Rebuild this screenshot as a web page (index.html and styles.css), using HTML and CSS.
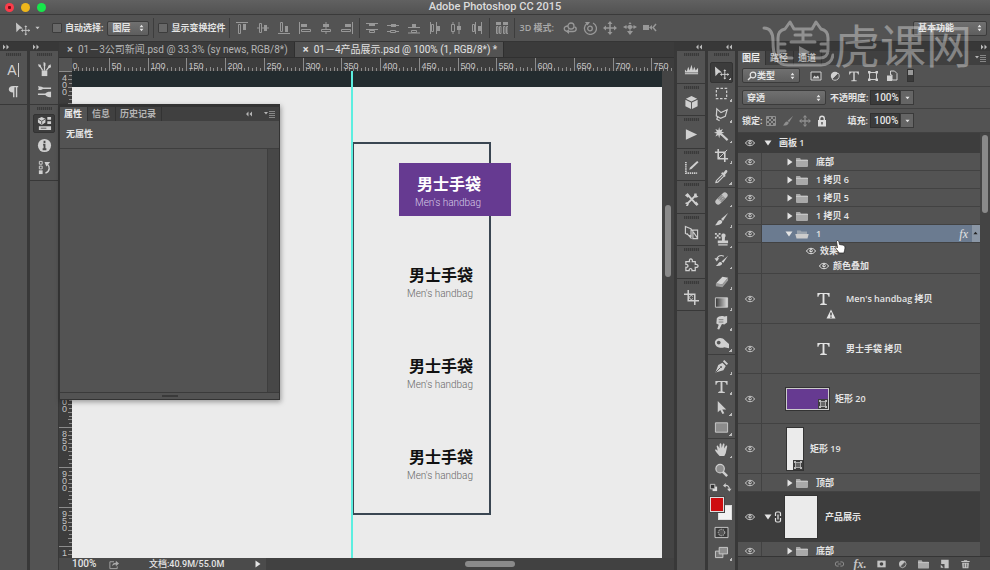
FILE: index.html
```html
<!DOCTYPE html>
<html lang="zh-CN">
<head>
    <meta charset="UTF-8">
    <meta name="viewport" content="width=device-width, initial-scale=1.0">
    <title>Adobe Photoshop CC 2015</title>
    <link rel="stylesheet" href="styles.css">
</head>
<body>
    <svg class="sprite" width="0" height="0" aria-hidden="true">
        <!-- common -->
        <symbol id="updown" viewBox="0 0 6 10"><path d="M3 1 5.4 4H.6zM3 9 .6 6h4.8z" fill="currentColor"/></symbol>
        <symbol id="down" viewBox="0 0 6 4"><path d="M.5.5h5L3 3.5z" fill="currentColor"/></symbol>
        <symbol id="dbl-right" viewBox="0 0 8 6"><path d="M1 .5 3.5 3 1 5.5zM4.5.5 7 3 4.5 5.5z" fill="currentColor"/></symbol>
        <symbol id="dbl-left" viewBox="0 0 8 6"><path d="M3.5.5 1 3l2.500 2.500zM7 .5 4.500 3 7 5.500z" fill="currentColor"/></symbol>
        <symbol id="panel-menu" viewBox="0 0 12 8"><path d="M0 2h4L2 4.500z" fill="currentColor"/><path d="M5 1.500h6M5 3.500h6M5 5.500h6M5 7.500h6" stroke="currentColor" opacity=".6"/></symbol>
        <symbol id="eye" viewBox="0 0 10 8"><path d="M.5 4C2.500.4 7.500.4 9.500 4 7.500 7.600 2.500 7.600.5 4z" fill="#4a4a4a" stroke="currentColor"/><circle cx="5" cy="3.800" r="1.700" fill="currentColor"/><circle cx="5.200" cy="3.600" r=".7" fill="#333"/></symbol>
        <symbol id="folder" viewBox="0 0 12 10"><path d="M0 1.500Q0 1 .5 1H4l1 1.500h6q1 0 1 1V9q0 1-1 1H1q-1 0-1-1z" fill="#a9a9a9"/><path d="M0 3.500h12" stroke="#c6c6c6"/></symbol>
        <symbol id="folder-open" viewBox="0 0 14 10"><path d="M2 5V1.500h3.500l1 1H12V5z" fill="#9aa3ad"/><path d="M.3 5h13.400L12.500 9.500h-11z" fill="#ccc"/></symbol>
        <symbol id="tri-right" viewBox="0 0 6 8"><path d="M.5.500 5.500 4 .5 7.500z" fill="currentColor"/></symbol>
        <symbol id="tri-down" viewBox="0 0 8 6"><path d="M.5.500h7L4 5.500z" fill="currentColor"/></symbol>
        <symbol id="shape-badge" viewBox="0 0 10 10"><path d="M0 0h10v10H0z" fill="#3e3e3e"/><path d="M2.500 2.500h5v5h-5z" fill="#666" stroke="#aaa"/><path d="M1 1h2v2H1zM7 1h2v2H7zM1 7h2v2H1zM7 7h2v2H7z" fill="#bbb"/></symbol>

        <!-- tools -->
        <symbol id="move" viewBox="0 0 16 16"><path d="M1 1.500 8.500 8 5 8.300 1.500 12z" fill="currentColor"/><path d="M11.500 5.500v9M7 10h9" stroke="currentColor"/><path d="m11.500 4.500 1.600 2h-3.200zM11.500 15.500l1.600-2h-3.200zM6.500 10l2-1.600v3.200zM16 10l-1.800-1.600v3.200z" fill="currentColor"/></symbol>
        <symbol id="marquee" viewBox="0 0 16 16"><path d="M2.500 2.500h11v11h-11z" fill="none" stroke="currentColor" stroke-width="1.300" stroke-dasharray="2.700 1.700"/></symbol>
        <symbol id="lasso" viewBox="0 0 16 16"><path d="m3 2 4.500 4L14 3l-2 7-5 2-4.500-2.500zM4 10l-1 3 3 1.500" fill="none" stroke="currentColor" stroke-width="1.300"/></symbol>
        <symbol id="wand" viewBox="0 0 16 16"><path d="m7.500 7.500 7 6.500" stroke="currentColor" stroke-width="2.200"/><path d="m5.500 0 .9 3.500L9.500 2 8 5l3 .8-3 1.200 1.500 2.700L6.400 8.500 5.500 12l-1-3.500L1.500 10 3 7 0 6l3-1-1.500-3L4.600 3.500z" fill="currentColor"/></symbol>
        <symbol id="crop" viewBox="0 0 16 16"><path d="M4.500 1v10.500H15M1 4.500h10.500V15" fill="none" stroke="currentColor" stroke-width="1.700"/><path d="m5 11 9-9" stroke="currentColor"/></symbol>
        <symbol id="dropper" viewBox="0 0 16 16"><path d="m9 6-6.500 6.500L2 14.500l2-.5L10.500 7.500" fill="none" stroke="currentColor" stroke-width="1.200"/><path d="m7.500 4.500 1.500-1 1 .5 2-2.500c1.500-1 3 .5 2 2L11.800 6l.5 1.500-1 1z" fill="currentColor"/></symbol>
        <symbol id="heal" viewBox="0 0 16 16"><g transform="rotate(-45 8 8)"><rect x="0" y="5" width="16" height="6" rx="3" fill="#c4c4c4"/><path d="M5 5h6v6H5z" fill="#8b8b8b"/><path d="M6 7h1m2 0h1M6 9h1m2 0h1" stroke="#eee"/></g></symbol>
        <symbol id="brush" viewBox="0 0 16 16"><path d="M15 1 7.500 7.500 9.500 9.500z" fill="currentColor"/><path d="M6.500 8.500c2 0 3 1.500 2 3C7.500 13.500 4 14.500 1 14c2-1 2.500-5 5.500-5.500z" fill="currentColor"/></symbol>
        <symbol id="stamp" viewBox="0 0 16 16"><path d="M1 1h2v2H1zM5 1h2v2H5zM3 3h2v2H3zM1 5h2v2H1zM5 5h2v2H5z" fill="currentColor"/><path d="M10 1.500c2.500 0 3 2.500 1.700 4.200L11.500 9H15v3H4V9h4.500l-.2-3.300C7.500 4 7.800 1.500 10 1.500zM4.500 13h10v1.500h-10z" fill="currentColor"/></symbol>
        <symbol id="history-brush" viewBox="0 0 16 16"><path d="M15 3 8 9l2 1.500zM7 9.500c2 .5 2 2 1 3-1.500 1.300-4 1.500-6 1 2.500-1 2.500-4 5-4z" fill="currentColor"/><path d="M3 7c0-3.500 4-5.500 7.500-3.500" fill="none" stroke="currentColor" stroke-width="1.300"/><path d="M.5 5.500h5L3 9z" fill="currentColor"/></symbol>
        <symbol id="eraser" viewBox="0 0 16 16"><path d="m9 3 6 1-6 7-7-1z" fill="#d2d2d2"/><path d="m2 10 7 1v3l-7-1zM9 11l6-7v3l-6 7z" fill="#9c9c9c"/></symbol>
        <symbol id="gradient" viewBox="0 0 16 16"><linearGradient id="gr"><stop stop-color="#333"/><stop offset="1" stop-color="#ddd"/></linearGradient><path d="M1.500 3h13v10h-13z" fill="url(#gr)" stroke="#ccc"/></symbol>
        <symbol id="smudge" viewBox="0 0 16 16"><path d="M3 3.500C5 1 8 .5 11 1.500l3-.5v7l-3 2-2.500-.5L5.500 15.500l-2-.5L5 10.500 2.500 9z" fill="currentColor"/><path d="M5 5h5M5 7.500h5" stroke="#777"/></symbol>
        <symbol id="dodge" viewBox="0 0 16 16"><path d="M1 6c2-5 8-5 10.500-1.500L16 8.500V13l-5-1c-4 1.500-10.500 0-10-6z" fill="currentColor"/><circle cx="5" cy="7" r="2" fill="#555"/></symbol>
        <symbol id="pen" viewBox="0 0 16 16"><path d="m1.500 14.500 3-8L9 4l3.500 3.500L10 12z" fill="currentColor"/><path d="m9.500 2.500 1.500-1.500L15 5l-1.500 1.500z" fill="currentColor"/><path d="m2 14 5-5" stroke="#555"/><circle cx="7.500" cy="8.500" r="1" fill="#555"/></symbol>
        <symbol id="type" viewBox="0 0 16 16"><path d="M1.500 2h13v4h-1.200C13 3.800 12.300 3.200 9 3.200v9.300c0 .9.8 1.200 2.500 1.300V15h-7v-1.200c1.700-.1 2.500-.4 2.500-1.300V3.200C3.700 3.200 3 3.800 2.700 6H1.500z" fill="currentColor"/></symbol>
        <symbol id="arrow" viewBox="0 0 16 16"><path d="M4 1v12l2.700-2.300L9 15l2-1-2.200-4H13z" fill="currentColor"/></symbol>
        <symbol id="rect" viewBox="0 0 16 16"><path d="M1.500 3h13v10h-13z" fill="#8c8c8c" stroke="#ccc"/></symbol>
        <symbol id="hand" viewBox="0 0 16 16"><path d="M6 15c-2-2-4-4.500-5-6.500.8-1 2-.2 3 1L2.800 4.500c.4-1.200 1.500-1 1.900.2L5.800 7 6 2c.5-1 1.500-1 1.800 0L8.200 6.500 9.500 2c.6-.9 1.700-.6 1.700.5L10.700 7l2-3c.8-.6 1.600 0 1.300 1L12.500 12 11 15z" fill="currentColor"/></symbol>
        <symbol id="zoom" viewBox="0 0 16 16"><path d="m9 9 5 5" stroke="currentColor" stroke-width="2.600"/><circle cx="6.500" cy="6" r="4.500" fill="#8e8e8e" stroke="currentColor" stroke-width="1.300"/></symbol>
        <symbol id="swap" viewBox="0 0 10 10"><path d="M2 3c3-1 5 1 5 4" fill="none" stroke="currentColor" stroke-width="1.300"/><path d="M0 3l3-3v5zM4.500 6.500h5L7 9.500z" fill="currentColor"/></symbol>
        <symbol id="default-colors" viewBox="0 0 10 10"><path d="M4 4h5v5H4z" fill="#ddd"/><path d="M1.500 1.500h5v5h-5z" fill="#333" stroke="#ccc"/></symbol>
        <symbol id="mask" viewBox="0 0 16 14"><path d="M1 1.500h14v11H1z" fill="#3a3a3a" stroke="#ccc"/><circle cx="8" cy="7" r="3.500" fill="#555" stroke="#ccc" stroke-dasharray="1.500 1"/></symbol>
        <symbol id="screen" viewBox="0 0 16 14"><path d="M1.500 5.500h8v7h-8z" fill="#777" stroke="#ccc"/><path d="M5.500 1.500h9v7h-9z" fill="#8e8e8e" stroke="#ccc"/></symbol>

        <!-- collapsed panels -->
        <symbol id="char" viewBox="0 0 3 16"><path d="M1.500 1v14" stroke="currentColor"/></symbol>
        <symbol id="para" viewBox="0 0 16 16"><path d="M7.500 2H13v1.500h-1V14h-1.500V3.500H9V14H7.500V9C1.500 9 1.500 2 7.500 2z" fill="currentColor"/></symbol>
        <symbol id="brush-pot" viewBox="0 0 16 16"><path d="M5 9h6v6H5z" fill="currentColor"/><path d="M6 9 3 4M8 9V3M10 9l3-4" stroke="currentColor" stroke-width="1.300"/><path d="M1 2.500 4 3v3L2 5zM7 0l2 1v3H7zM14.500 2.500 12 4v3l3-1.500z" fill="currentColor"/></symbol>
        <symbol id="brushes" viewBox="0 0 16 16"><path d="M6 4.500h9M1 11h9" stroke="currentColor" stroke-width="1.500"/><path d="M1 2c3 1 4 0 6 2.500C5 7 3 6 1 6.500 2 5 2 4 1 2zM15 8c-2 .5-5 0-6.500 3C10 14.500 13 14 15 14z" fill="currentColor"/></symbol>
        <symbol id="props" viewBox="0 0 16 16"><path d="m5 1 4 2v4L5 9.500 1 7V3z" fill="currentColor"/><path d="m1.500 3.500 3.500 2 3.500-2M5 5.500V9" stroke="#555" fill="none"/><path d="M11 1h4v3h-4zM11 5.500h4v3h-4zM2 11h13v4H2z" fill="currentColor"/><path d="M4 13h6" stroke="#555"/></symbol>
        <symbol id="info" viewBox="0 0 16 16"><circle cx="8" cy="8" r="7" fill="currentColor"/><path d="M8 3v2.200M6.500 7H8v5M6 12h4" stroke="#4b4b4b" stroke-width="2" fill="none"/></symbol>
        <symbol id="history" viewBox="0 0 16 16"><path d="M2.500 1.500h3v3h-3zM2.500 6.500h3v3h-3z" fill="none" stroke="currentColor"/><path d="M2 11h4v4H2z" fill="currentColor"/><path d="M9 14c5-2 5-7 2-9.500" fill="none" stroke="currentColor" stroke-width="1.500"/><path d="M8 2h6l-4 5z" fill="currentColor"/></symbol>
        <symbol id="histogram" viewBox="0 0 16 16"><path d="M1 13V8l2 2 1.500-5L6 9l2-6 1.500 6L11 5l1.500 4L15 6v7z" fill="currentColor"/><path d="M1 11.500h14" stroke="#777"/></symbol>
        <symbol id="cube" viewBox="0 0 16 16"><path d="m8 1 6 3-6 3-6-3zM1.500 5 7.500 8v7l-6-3zM14.500 5l-6 3v7l6-3z" fill="currentColor"/></symbol>
        <symbol id="play" viewBox="0 0 16 16"><path d="m2 2.500 12 5.500-12 5.500z" fill="currentColor"/></symbol>
        <symbol id="measure" viewBox="0 0 16 16"><path d="M2 2v12h12" fill="none" stroke="currentColor" stroke-width="1.800" stroke-dasharray="1.500 .8"/><path d="m5.500 10.500 1-2.500L14 1l1.500 1.500L8 9.500z" fill="currentColor"/></symbol>
        <symbol id="wrench" viewBox="0 0 16 16"><path d="M3 13 13 3M4 3l9 10" stroke="currentColor" stroke-width="2"/><path d="M1 3.500 4 1l2 3-2 2zM11 1.500 10.500 5l2 1L15.500 5l-2-1 0-2.500zM11 12l2-2 2.500 3-2 2zM1 12c2-2 4-1 4 1s-2 2-3 2l1-2z" fill="currentColor"/></symbol>
        <symbol id="layer-comps" viewBox="0 0 16 16"><path d="m1.500 1.500 6 2.500v8l-6-3zM9.500 5.500h5v9h-5zM3 9l5 5.500M7.500 4l7 10" fill="none" stroke="currentColor" stroke-width="1.200"/></symbol>
        <symbol id="puzzle" viewBox="0 0 16 16"><path d="M2 5h4C4.500 1 10 1 8.800 5H12v3c4-1 4 4 0 3v3.500H8.500c.5-3-3.500-3-3 0H2V11c3 .5 3-3.500 0-3z" fill="none" stroke="currentColor" stroke-width="1.300"/></symbol>
        <symbol id="crop-c" viewBox="0 0 16 16"><path d="M4.500 0v11.500H16M0 4.500h11.500V16" fill="none" stroke="currentColor" stroke-width="1.600"/><path d="M9.500 7a2 2 0 1 0 0 2" fill="none" stroke="currentColor"/></symbol>

        <!-- align and distribute -->
        <symbol id="al-top" viewBox="0 0 12 12"><path d="M0 .5h12M2.500 2.500h2v9h-2z" fill="none" stroke="currentColor"/><path d="M7 2h3v6H7z" fill="currentColor"/></symbol>
        <symbol id="al-mid" viewBox="0 0 12 12"><path d="M0 6h12" stroke="currentColor"/><path d="M2.500 1.500h2v9h-2z" fill="#535353" stroke="currentColor"/><path d="M7 3h3v6H7z" fill="currentColor"/></symbol>
        <symbol id="al-bottom" viewBox="0 0 12 12"><path d="M0 11.500h12M2.500.5h2v9h-2z" fill="none" stroke="currentColor"/><path d="M7 4h3v6H7z" fill="currentColor"/></symbol>
        <symbol id="al-center" viewBox="0 0 12 12"><path d="M6 0v12" stroke="currentColor"/><path d="M1.500 7.500h9v2h-9z" fill="#535353" stroke="currentColor"/><path d="M3 2h6v3H3z" fill="currentColor"/></symbol>
        <symbol id="al-left" viewBox="0 0 12 12"><path d="M.5 0v12M2.500 7.500h9v2h-9z" fill="none" stroke="currentColor"/><path d="M2 2h6v3H2z" fill="currentColor"/></symbol>
        <symbol id="al-right" viewBox="0 0 12 12"><path d="M11.500 0v12M.5 7.500h9v2h-9z" fill="none" stroke="currentColor"/><path d="M4 2h6v3H4z" fill="currentColor"/></symbol>
        <symbol id="ds-top" viewBox="0 0 12 12"><path d="M0 1.500h12M0 7.500h12" stroke="currentColor"/><path d="M3 2h6v2H3z" fill="currentColor"/><path d="M3.500 8.500h5v2h-5z" fill="none" stroke="currentColor"/></symbol>
        <symbol id="ds-mid" viewBox="0 0 12 12"><path d="M0 3.500h12M0 9.500h12" stroke="currentColor"/><path d="M4 2h5v3H4z" fill="currentColor"/><path d="M3.500 8.500h5v2h-5z" fill="#535353" stroke="currentColor"/></symbol>
        <symbol id="ds-bottom" viewBox="0 0 12 12"><path d="M0 5.500h12M0 11h12" stroke="currentColor"/><path d="M4 2h4v3H4z" fill="currentColor"/><path d="M3.500 8.500h5v2h-5z" fill="none" stroke="currentColor"/></symbol>
        <symbol id="ds-left" viewBox="0 0 12 12"><path d="M1.500 0v12M7.500 0v12M2.500 2.500h2v7h-2z" fill="none" stroke="currentColor"/><path d="M8 4h3v5H8z" fill="currentColor"/></symbol>
        <symbol id="ds-center" viewBox="0 0 12 12"><path d="M3 0v12M9 0v12" stroke="currentColor"/><path d="M1.500 2.500h3v7h-3z" fill="#535353" stroke="currentColor"/><path d="M7 4h4v4H7z" fill="currentColor"/></symbol>
        <symbol id="ds-right" viewBox="0 0 12 12"><path d="M4.500 0v12M10.500 0v12M1.500 2.500h2v7h-2z" fill="none" stroke="currentColor"/><path d="M7 4h3v5H7z" fill="currentColor"/></symbol>
        <symbol id="auto-align" viewBox="0 0 12 12"><path d="M0 0h5v3H0zM7 0h5v3H7z" fill="currentColor"/><path d="M.5 4.500h1.500v7H.5zM3.500 4.500H5v7H3.500zM7.500 4.500H9v7H7.500zM10.500 4.500H12v7h-1.500z" fill="none" stroke="currentColor"/></symbol>

        <!-- 3D modes -->
        <symbol id="orbit" viewBox="0 0 14 14"><circle cx="8" cy="5" r="3" fill="none" stroke="currentColor" stroke-width="1.300"/><path d="M5 5C0 5 0 10 5 10.500h5c4 0 4-4 1.500-4.500" fill="none" stroke="currentColor" stroke-width="1.300"/><path d="M6 8v5l-3-2.500z" fill="currentColor"/></symbol>
        <symbol id="roll" viewBox="0 0 14 14"><circle cx="7" cy="7.500" r="2.300" fill="none" stroke="currentColor" stroke-width="1.300"/><path d="M4 2.500a6 6 0 1 0 6-.5" fill="none" stroke="currentColor" stroke-width="1.300"/><path d="M2 1h5L4.500 4.500z" fill="currentColor"/></symbol>
        <symbol id="pan" viewBox="0 0 14 14"><path d="m7 0 2.500 3h-5zM7 14l2.500-3h-5zM0 7l3-2.500v5zM14 7l-3-2.500v5z" fill="currentColor"/><path d="M7 3v8M3 7h8" stroke="currentColor" stroke-width="1.500"/></symbol>
        <symbol id="slide" viewBox="0 0 14 14"><circle cx="7" cy="6" r="2.200" fill="currentColor"/><path d="m7 1 1.500 2h-3zM7 14l3-4H4zM0 6l3.500-2v4zM14 6l-3.500-2v4z" fill="currentColor"/><path d="M3 6h8M7 6v5" stroke="currentColor"/></symbol>
        <symbol id="camera" viewBox="0 0 14 14"><path d="M0 4h6v5H0zM6 6.500 9 4v5z" fill="currentColor"/><path d="m13 3-3 3.500L13 10" fill="none" stroke="currentColor" stroke-width="1.500"/></symbol>

        <!-- layers panel -->
        <symbol id="search" viewBox="0 0 10 10"><circle cx="6" cy="4" r="2.800" fill="none" stroke="currentColor" stroke-width="1.200"/><path d="M4 6 1 9" stroke="currentColor" stroke-width="1.500"/></symbol>
        <symbol id="f-image" viewBox="0 0 12 12"><path d="M1 2h10v8H1z" fill="#444" stroke="currentColor"/><path d="m2.500 8.500 2-3 1.500 1.500 2-1.500 1.500 3z" fill="currentColor"/></symbol>
        <symbol id="f-adjust" viewBox="0 0 12 12"><circle cx="6" cy="6" r="4.200" fill="currentColor"/><path d="M9 3a4.200 4.200 0 0 1-6 6z" fill="#555" stroke="currentColor" stroke-width=".8"/></symbol>
        <symbol id="f-shape" viewBox="0 0 12 12"><path d="M2.500 2.500h7v7h-7z" fill="none" stroke="currentColor"/><path d="M1 1h2.500v2.500H1zM8.500 1H11v2.500H8.500zM1 8.500h2.500V11H1zM8.500 8.500H11V11H8.500z" fill="currentColor"/></symbol>
        <symbol id="f-smart" viewBox="0 0 12 12"><path d="M4.500 1h4L11 3.500V10H6V5H4.500z" fill="none" stroke="currentColor"/><path d="M1 5.500h5V11H1z" fill="currentColor"/></symbol>
        <symbol id="l-pixels" viewBox="0 0 12 12"><path d="M1.500 1.500h9v9h-9z" fill="none" stroke="currentColor"/><path d="M2 2h2v2H2zM6 2h2v2H6zM4 4h2v2H4zM8 4h2v2H8zM2 6h2v2H2zM6 6h2v2H6zM4 8h2v2H4zM8 8h2v2H8z" fill="currentColor"/></symbol>
        <symbol id="lock" viewBox="0 0 12 12"><path d="M2 5h8v6.500H2z" fill="currentColor"/><path d="M3.700 5.500V3.500a2.300 2.300 0 0 1 4.600 0v2" fill="none" stroke="currentColor" stroke-width="1.400"/><path d="M6 7v2.500" stroke="#444" stroke-width="1.300"/></symbol>
        <symbol id="warn" viewBox="0 0 10 10"><path d="m5 .5 4.500 9h-9z" fill="currentColor"/><path d="M5 3.500v3M5 7.500v1.200" stroke="#222" stroke-width="1.200"/></symbol>
        <symbol id="chain-v" viewBox="0 0 8 12"><path d="M1.500 5V2.500Q1.500 1 3 1h2q1.500 0 1.500 1.500V5M1.500 7v2.500Q1.500 11 3 11h2q1.500 0 1.500-1.500V7M4 3.500v5" fill="none" stroke="currentColor" stroke-width="1.200"/></symbol>
        <symbol id="chain-h" viewBox="0 0 12 12"><path d="M5 3.500H3Q1 3.500 1 6t2 2.500h2M7 3.500h2q2 0 2 2.500T9 8.500H7M4 6h4" fill="none" stroke="currentColor" stroke-width="1.200"/></symbol>
        <symbol id="b-mask" viewBox="0 0 12 12"><path d="M1 2h10v8H1z" fill="currentColor"/><circle cx="6" cy="6" r="2.200" fill="#444"/></symbol>
        <symbol id="b-new" viewBox="0 0 12 12"><path d="M2 1h9v10H6V6H2z" fill="currentColor"/><path d="M1.500 7v3.500H5z" fill="currentColor"/></symbol>
        <symbol id="b-trash" viewBox="0 0 12 12"><path d="M1 3h10M4 2h4" stroke="currentColor" stroke-width="1.300"/><path d="M2 4.500h8L9.500 11h-7z" fill="currentColor"/><path d="M4.500 5.500V10M7.500 5.500V10" stroke="#555"/></symbol>
        <symbol id="share" viewBox="0 0 12 12"><path d="M6 3H1.500v7.500h8V8" fill="none" stroke="currentColor"/><path d="M4 8c0-3 1.500-4 4-4V2l3.500 3L8 8V6C6 6 5 6.500 4 8z" fill="currentColor"/></symbol>
    </svg>

    <header class="titlebar">
        <div class="lights">
            <button class="light close" aria-label="关闭"></button>
            <button class="light minimize" aria-label="最小化"></button>
            <button class="light full" aria-label="缩放"></button>
        </div>
        <h1>Adobe Photoshop CC 2015</h1>
    </header>

    <div class="options">
        <button class="current-tool" aria-label="移动工具"><svg class="i16"><use href="#move"/></svg><svg class="i5"><use href="#down"/></svg></button>
        <label class="check"><input type="checkbox">自动选择:</label>
        <span class="pick pick-target"><select aria-label="选择对象"><option>图层</option><option>组</option></select><svg class="updown"><use href="#updown"/></svg></span>
        <i class="sep"></i>
        <label class="check"><input type="checkbox">显示变换控件</label>
        <i class="sep"></i>
        <div class="icon-group">
            <button aria-label="顶对齐"><svg><use href="#al-top"/></svg></button>
            <button aria-label="垂直居中对齐"><svg><use href="#al-mid"/></svg></button>
            <button aria-label="底对齐"><svg><use href="#al-bottom"/></svg></button>
            <button aria-label="左对齐"><svg><use href="#al-left"/></svg></button>
            <button aria-label="水平居中对齐"><svg><use href="#al-center"/></svg></button>
            <button aria-label="右对齐"><svg><use href="#al-right"/></svg></button>
        </div>
        <i class="sep"></i>
        <div class="icon-group">
            <button aria-label="按顶分布"><svg><use href="#ds-top"/></svg></button>
            <button aria-label="垂直居中分布"><svg><use href="#ds-mid"/></svg></button>
            <button aria-label="按底分布"><svg><use href="#ds-bottom"/></svg></button>
            <button aria-label="按左分布"><svg><use href="#ds-left"/></svg></button>
            <button aria-label="水平居中分布"><svg><use href="#ds-center"/></svg></button>
            <button aria-label="按右分布"><svg><use href="#ds-right"/></svg></button>
        </div>
        <i class="sep"></i>
        <div class="icon-group">
            <button aria-label="自动对齐图层"><svg><use href="#auto-align"/></svg></button>
        </div>
        <i class="sep"></i>
        <span class="dim">3D 模式:</span>
        <div class="icon-group mode-3d">
            <button aria-label="旋转"><svg><use href="#orbit"/></svg></button>
            <button aria-label="滚动"><svg><use href="#roll"/></svg></button>
            <button aria-label="拖动"><svg><use href="#pan"/></svg></button>
            <button aria-label="滑动"><svg><use href="#slide"/></svg></button>
            <button aria-label="缩放相机"><svg><use href="#camera"/></svg></button>
        </div>
        <span class="pick pick-space"><select aria-label="工作区"><option>基本功能</option></select><svg class="updown"><use href="#updown"/></svg></span>
    </div>

    <main class="workspace">
        <aside class="rail rail-text">
            <button class="collapse" aria-label="展开面板"><svg class="dbl"><use href="#dbl-right"/></svg></button>
            <div class="dock">
                <button class="letter" aria-label="字符">A<svg><use href="#char"/></svg></button>
                <button aria-label="段落"><svg class="i16"><use href="#para"/></svg></button>
            </div>
        </aside>
        <aside class="rail rail-panels">
            <button class="collapse" aria-label="展开面板"><svg class="dbl"><use href="#dbl-right"/></svg></button>
            <div class="dock">
                <button aria-label="画笔预设"><svg class="i16"><use href="#brush-pot"/></svg></button>
                <button aria-label="画笔"><svg class="i16"><use href="#brushes"/></svg></button>
            </div>
            <div class="dock">
                <button class="on" aria-label="属性"><svg class="i16"><use href="#props"/></svg></button>
                <button aria-label="信息"><svg class="i16"><use href="#info"/></svg></button>
                <button aria-label="历史记录"><svg class="i16"><use href="#history"/></svg></button>
            </div>
        </aside>

        <section class="document">
            <nav class="doc-tabs">
                <a href="#"><b>×</b>01－3公司新闻.psd @ 33.3% (sy news, RGB/8*)</a>
                <a href="#" class="active"><b>×</b>01－4产品展示.psd @ 100% (1, RGB/8*) *</a>
            </nav>
            <div class="corner"></div>
            <svg class="ruler-x" id="rulerX"></svg>
            <svg class="ruler-y" id="rulerY"></svg>
            <div class="canvas">
                <div class="artboard-top"></div>
                <div class="frame">
                    <div class="item hot"><h2>男士手袋</h2><p>Men's handbag</p></div>
                    <div class="item"><h2>男士手袋</h2><p>Men's handbag</p></div>
                    <div class="item"><h2>男士手袋</h2><p>Men's handbag</p></div>
                    <div class="item"><h2>男士手袋</h2><p>Men's handbag</p></div>
                </div>
                <div class="guide"></div>
            </div>
            <div class="scroll-y"><i></i></div>
            <footer class="status">
                <span class="zoom-level">100%</span>
                <button class="share" aria-label="共享"><svg><use href="#share"/></svg></button>
                <span class="doc-size">文档:40.9M/55.0M</span>
                <button class="more" aria-label="状态菜单"><svg class="tri-r"><use href="#tri-right"/></svg></button>
                <div class="scroll-x"><i></i></div>
            </footer>

            <section class="floating">
                <nav class="panel-tabs">
                    <a href="#" class="active">属性</a>
                    <a href="#">信息</a>
                    <a href="#">历史记录</a>
                    <span class="tools-right"><svg class="dbl"><use href="#dbl-left"/></svg><svg class="menu"><use href="#panel-menu"/></svg></span>
                </nav>
                <p class="no-props">无属性</p>
                <div class="props-body"><i></i></div>
                <div class="grip-bar"></div>
            </section>
        </section>

        <aside class="rail rail-right">
            <button class="collapse end" aria-label="展开面板"><svg class="dbl"><use href="#dbl-left"/></svg></button>
            <div class="stack">
                <div class="dock"><button aria-label="直方图"><svg class="i16"><use href="#histogram"/></svg></button></div>
                <div class="dock"><button aria-label="3D"><svg class="i16"><use href="#cube"/></svg></button></div>
                <div class="dock"><button aria-label="动作"><svg class="i16"><use href="#play"/></svg></button></div>
                <div class="dock"><button aria-label="测量记录"><svg class="i16"><use href="#measure"/></svg></button></div>
                <div class="dock"><button aria-label="工具预设"><svg class="i16"><use href="#wrench"/></svg></button></div>
                <div class="dock"><button aria-label="图层复合"><svg class="i16"><use href="#layer-comps"/></svg></button></div>
                <div class="dock"><button aria-label="扩展"><svg class="i16"><use href="#puzzle"/></svg></button></div>
                <div class="dock"><button aria-label="裁剪扩展"><svg class="i16"><use href="#crop-c"/></svg></button></div>
            </div>
        </aside>

        <aside class="rail toolbox">
            <button class="collapse end" aria-label="双栏"><svg class="dbl"><use href="#dbl-left"/></svg></button>
            <div class="tool-list">
                <div class="tools tools-select">
                    <button class="on" aria-label="移动"><svg class="i16"><use href="#move"/></svg></button>
                    <button aria-label="矩形选框"><svg class="i16"><use href="#marquee"/></svg></button>
                    <button aria-label="多边形套索"><svg class="i16"><use href="#lasso"/></svg></button>
                    <button aria-label="魔棒"><svg class="i16"><use href="#wand"/></svg></button>
                    <button aria-label="裁剪"><svg class="i16"><use href="#crop"/></svg></button>
                    <button aria-label="吸管"><svg class="i16"><use href="#dropper"/></svg></button>
                </div>
                <div class="tools tools-paint">
                    <button aria-label="修复画笔"><svg class="i16"><use href="#heal"/></svg></button>
                    <button aria-label="画笔"><svg class="i16"><use href="#brush"/></svg></button>
                    <button aria-label="仿制图章"><svg class="i16"><use href="#stamp"/></svg></button>
                    <button aria-label="历史记录画笔"><svg class="i16"><use href="#history-brush"/></svg></button>
                    <button aria-label="橡皮擦"><svg class="i16"><use href="#eraser"/></svg></button>
                    <button aria-label="渐变"><svg class="i16"><use href="#gradient"/></svg></button>
                    <button aria-label="涂抹"><svg class="i16"><use href="#smudge"/></svg></button>
                    <button aria-label="海绵"><svg class="i16"><use href="#dodge"/></svg></button>
                </div>
                <div class="tools tools-vector">
                    <button aria-label="钢笔"><svg class="i16"><use href="#pen"/></svg></button>
                    <button aria-label="文字"><svg class="i16"><use href="#type"/></svg></button>
                    <button aria-label="路径选择"><svg class="i16"><use href="#arrow"/></svg></button>
                    <button aria-label="矩形"><svg class="i16"><use href="#rect"/></svg></button>
                </div>
                <div class="tools tools-view">
                    <button aria-label="抓手"><svg class="i16"><use href="#hand"/></svg></button>
                    <button class="single" aria-label="缩放"><svg class="i16"><use href="#zoom"/></svg></button>
                </div>
                <div class="color-mini">
                    <button aria-label="默认颜色"><svg><use href="#default-colors"/></svg></button>
                    <button aria-label="切换颜色"><svg><use href="#swap"/></svg></button>
                </div>
                <div class="swatches">
                    <button class="back" aria-label="背景色"></button>
                    <button class="fore" aria-label="前景色"></button>
                </div>
                <div class="tools tools-mode">
                    <button class="single" aria-label="快速蒙版"><svg><use href="#mask"/></svg></button>
                    <button aria-label="屏幕模式"><svg><use href="#screen"/></svg></button>
                </div>
            </div>
        </aside>

        <aside class="layers">
            <button class="collapse end" aria-label="折叠面板"><svg class="dbl"><use href="#dbl-right"/></svg></button>
            <nav class="panel-tabs">
                <a href="#" class="active">图层</a>
                <a href="#">路径</a>
                <a href="#">通道</a>
                <span class="tools-right"><svg class="menu"><use href="#panel-menu"/></svg></span>
            </nav>
            <div class="layer-opts">
                <span class="pick pick-kind"><svg class="search"><use href="#search"/></svg><select aria-label="过滤类型"><option>类型</option></select><svg class="updown"><use href="#updown"/></svg></span>
                <div class="filters">
                    <button aria-label="像素图层"><svg><use href="#f-image"/></svg></button>
                    <button aria-label="调整图层"><svg><use href="#f-adjust"/></svg></button>
                    <button aria-label="文字图层"><svg><use href="#type"/></svg></button>
                    <button aria-label="形状图层"><svg><use href="#f-shape"/></svg></button>
                    <button aria-label="智能对象"><svg><use href="#f-smart"/></svg></button>
                    <button class="switch" aria-label="过滤开关"></button>
                </div>
            </div>
            <div class="layer-opts">
                <span class="pick pick-blend"><select aria-label="混合模式"><option>穿透</option></select><svg class="updown"><use href="#updown"/></svg></span>
                <label class="amount">不透明度:<input type="text" value="100%"></label>
                <button class="drop" aria-label="不透明度"><svg class="i5"><use href="#down"/></svg></button>
            </div>
            <div class="layer-opts lock-row">
                <span>锁定:</span>
                <div class="locks">
                    <button aria-label="锁定透明像素"><svg><use href="#l-pixels"/></svg></button>
                    <button aria-label="锁定图像像素"><svg><use href="#brush"/></svg></button>
                    <button aria-label="锁定位置"><svg><use href="#pan"/></svg></button>
                    <button class="lit" aria-label="锁定全部"><svg><use href="#lock"/></svg></button>
                </div>
                <label class="amount">填充:<input type="text" value="100%"></label>
                <button class="drop" aria-label="填充"><svg class="i5"><use href="#down"/></svg></button>
            </div>
            <div class="layer-area">
                <ul class="layer-list">
                    <li class="row board"><button class="eye" aria-label="可见性"><svg><use href="#eye"/></svg></button><svg class="tri-d"><use href="#tri-down"/></svg><span class="name">画板 1</span></li>
                    <li class="row group"><button class="eye" aria-label="可见性"><svg><use href="#eye"/></svg></button><svg class="tri-r"><use href="#tri-right"/></svg><svg class="folder"><use href="#folder"/></svg><span>底部</span></li>
                    <li class="row group"><button class="eye" aria-label="可见性"><svg><use href="#eye"/></svg></button><svg class="tri-r"><use href="#tri-right"/></svg><svg class="folder"><use href="#folder"/></svg><span>1 拷贝 6</span></li>
                    <li class="row group"><button class="eye" aria-label="可见性"><svg><use href="#eye"/></svg></button><svg class="tri-r"><use href="#tri-right"/></svg><svg class="folder"><use href="#folder"/></svg><span>1 拷贝 5</span></li>
                    <li class="row group"><button class="eye" aria-label="可见性"><svg><use href="#eye"/></svg></button><svg class="tri-r"><use href="#tri-right"/></svg><svg class="folder"><use href="#folder"/></svg><span>1 拷贝 4</span></li>
                    <li class="row group selected"><button class="eye" aria-label="可见性"><svg><use href="#eye"/></svg></button><svg class="tri-d"><use href="#tri-down"/></svg><svg class="folder open"><use href="#folder-open"/></svg><span>1</span><em class="fx">fx</em><button class="fx-toggle" aria-label="折叠效果"><svg class="i5"><use href="#down"/></svg></button></li>
                    <li class="row effects">
                        <div class="eye"></div>
                        <div class="effect-list">
                            <p><svg class="eye-icon"><use href="#eye"/></svg>效果</p>
                            <p class="sub"><svg class="eye-icon"><use href="#eye"/></svg>颜色叠加</p>
                        </div>
                    </li>
                    <li class="row tall text"><button class="eye" aria-label="可见性"><svg><use href="#eye"/></svg></button><span class="type-thumb"><svg class="i16"><use href="#type"/></svg><svg class="warn"><use href="#warn"/></svg></span><span>Men's handbag 拷贝</span></li>
                    <li class="row tall text"><button class="eye" aria-label="可见性"><svg><use href="#eye"/></svg></button><span class="type-thumb"><svg class="i16"><use href="#type"/></svg></span><span>男士手袋 拷贝</span></li>
                    <li class="row tall shape"><button class="eye" aria-label="可见性"><svg><use href="#eye"/></svg></button><span class="thumb purple"><svg><use href="#shape-badge"/></svg></span><span>矩形 20</span></li>
                    <li class="row tall shape"><button class="eye" aria-label="可见性"><svg><use href="#eye"/></svg></button><span class="thumb narrow"><svg><use href="#shape-badge"/></svg></span><span>矩形 19</span></li>
                    <li class="row group"><button class="eye" aria-label="可见性"><svg><use href="#eye"/></svg></button><svg class="tri-r"><use href="#tri-right"/></svg><svg class="folder"><use href="#folder"/></svg><span>顶部</span></li>
                    <li class="row tall board"><button class="eye" aria-label="可见性"><svg><use href="#eye"/></svg></button><svg class="tri-d"><use href="#tri-down"/></svg><svg class="chain"><use href="#chain-v"/></svg><span class="thumb page"></span><span>产品展示</span></li>
                    <li class="row group"><button class="eye" aria-label="可见性"><svg><use href="#eye"/></svg></button><svg class="tri-r"><use href="#tri-right"/></svg><svg class="folder"><use href="#folder"/></svg><span>底部</span></li>
                </ul>
                <div class="scroll-y"><i></i></div>
            </div>
            <footer class="layer-actions">
                <button class="off" aria-label="链接图层"><svg><use href="#chain-h"/></svg></button>
                <button class="fx" aria-label="图层样式">fx.</button>
                <button aria-label="添加蒙版"><svg><use href="#b-mask"/></svg></button>
                <button aria-label="调整图层"><svg><use href="#f-adjust"/></svg></button>
                <button aria-label="新建组"><svg><use href="#folder"/></svg></button>
                <button aria-label="新建图层"><svg><use href="#b-new"/></svg></button>
                <button aria-label="删除图层"><svg><use href="#b-trash"/></svg></button>
            </footer>
        </aside>
    </main>

    <div class="watermark">
        <svg viewBox="0 0 72 48">
            <path d="M2 9c7 0 9 5 9 13 0 15 3 24 15 24h33c7 0 11-3 12-10" fill="none" stroke="currentColor" stroke-width="3" stroke-linecap="round"/>
            <path d="M30 39h-6c-5 0-8-3-8-8V19c0-5 2-8 7-9l5-7 4 7h18l4-7 5 7c5 1 7 4 7 9v12c0 5-3 8-8 8h-8M33 16h16M29 23h24M41 10v13M16 25h7M16 32h7M66 25h-7M66 32h-7" fill="none" stroke="currentColor" stroke-width="3" stroke-linecap="round" stroke-linejoin="round"/>
            <path d="m37 27 11 6-11 6z" fill="currentColor"/>
        </svg>
        <span>虎课网</span>
    </div>
    <svg class="pointer" viewBox="0 0 12 14"><path d="M3.500 1c1 0 1.300 1 1.500 2l.5 2 3 .5c2 .5 2.500 1 2.500 3 0 2-1 3-1 5H5C4 11 1 9 1 7.500c1-.7 2 .5 2.500 1L2.500 2c0-.6.400-1 1-1z" fill="#fff" stroke="#222" stroke-width=".7"/></svg>

    <script src="script.js"></script>
</body>
</html>
```
FILE: styles.css
```css
* {
    box-sizing: border-box;
}
body {
    margin: 0;
    height: 100vh;
    overflow: hidden;
    display: flex;
    flex-direction: column;
    background: #383838;
    color: #e4e4e4;
    font: 9px/12px "Open Sans", "Noto Sans CJK SC", sans-serif;
}
h1, h2, p, ul {
    margin: 0;
    padding: 0;
}
a {
    color: inherit;
    text-decoration: none;
}
button, input, select {
    margin: 0;
    padding: 0;
    border: 0;
    background: none;
    color: inherit;
    font: inherit;
}
button {
    display: flex;
    align-items: center;
    justify-content: center;
}
svg {
    display: block;
    flex: none;
}
.sprite {
    position: absolute;
}
.i16 {
    width: 15px;
    height: 15px;
}
.i5 {
    width: 5px;
    height: 4px;
}
.dbl {
    width: 8px;
    height: 6px;
}
.menu {
    width: 12px;
    height: 8px;
}
.tri-r {
    width: 6px;
    height: 8px;
}
.tri-d {
    width: 8px;
    height: 6px;
}

/* title bar */
.titlebar {
    flex: none;
    height: 15px;
    display: grid;
    grid-template-columns: 1fr auto 1fr;
    align-items: center;
    background: linear-gradient(#616161, #525252);
    border-bottom: 1px solid #3a3a3a;
}
.titlebar h1 {
    font: 500 11px/14px Roboto, sans-serif;
    color: #dcdcdc;
}
.lights {
    display: flex;
    gap: 7px;
    padding-left: 5px;
}
.light {
    width: 9px;
    height: 9px;
    border-radius: 50%;
}
.close {
    background: radial-gradient(#7a0a16 20%, #fb3c4a 30%);
}
.minimize {
    background: #eeb61b;
}
.full {
    background: #17e64b;
}

/* options bar */
.options {
    flex: none;
    height: 27px;
    display: flex;
    align-items: center;
    padding: 0 3px 0 4px;
    background: #535353;
    border-bottom: 1px solid #353535;
    font-weight: 600;
}
.current-tool {
    gap: 5px;
    padding-left: 11px;
    margin-right: 12px;
    color: #c4c4c4;
}
.check {
    display: flex;
    align-items: center;
    gap: 3px;
}
.check input {
    appearance: none;
    width: 10px;
    height: 10px;
    background: #686868;
    border: 1px solid #3c3c3c;
    border-radius: 1px;
}
.check input:checked {
    background: #ccc;
}
.pick {
    display: flex;
    align-items: center;
    height: 15px;
    padding: 0 4px;
    background: linear-gradient(#707070, #5e5e5e);
    border: 1px solid #3b3b3b;
    border-radius: 2px;
}
.pick select {
    flex: 1;
    min-width: 0;
    appearance: none;
    line-height: 12px;
    outline: none;
}
.pick option {
    color: #222;
}
.updown {
    width: 5px;
    height: 8px;
}
.pick-target {
    width: 42px;
    margin-left: 4px;
}
.pick-space {
    width: 74px;
    margin-left: auto;
}
.sep {
    width: 1px;
    height: 20px;
    margin: 0 4px;
    background: #3d3d3d;
}
.icon-group {
    display: flex;
    gap: 5px;
    color: #989898;
}
.icon-group button {
    width: 16px;
}
.icon-group svg {
    width: 12px;
    height: 12px;
}
.mode-3d {
    gap: 4px;
    padding-left: 8px;
}
.mode-3d svg {
    width: 14px;
    height: 14px;
}
.dim {
    color: #a8a8a8;
}

/* workspace */
.workspace {
    flex: 1;
    min-height: 0;
    display: flex;
}
.collapse {
    flex: none;
    width: 100%;
    height: 9px;
    justify-content: flex-start;
    padding: 0 2px;
    color: #bdbdbd;
}
.collapse.end {
    justify-content: flex-end;
}
.rail {
    flex: none;
    width: 28px;
    margin-right: 3px;
    display: flex;
    flex-direction: column;
    background: linear-gradient(#383838 9px, #535353 9px);
}
.rail-text {
    width: 27px;
}
.rail-panels {
    margin-right: 1px;
}
.dock {
    display: flex;
    flex-direction: column;
    align-items: center;
    gap: 3px;
    padding-bottom: 3px;
    border-bottom: 1px solid #383838;
    color: #d0d0d0;
}
.dock::before, .tool-list::before {
    content: "";
    width: 15px;
    height: 3px;
    margin: 2px auto 1px;
    background: repeating-linear-gradient(90deg, #3a3a3a 0 1px, #4a4a4a 1px 2px);
}
.dock button {
    width: 22px;
    height: 19px;
}
.on {
    background-color: #3c3c3c;
    border: 1px solid #333;
    border-radius: 2px;
}
.letter {
    font-family: "Liberation Sans", sans-serif;
    font-size: 14px;
}
.letter svg {
    width: 3px;
    height: 16px;
}
.stack {
    height: 260px;
    display: grid;
    grid-auto-rows: 1fr;
}

/* toolbox */
.toolbox {
    width: 27px;
    color: #cfcfcf;
}
.tool-list {
    display: flex;
    flex-direction: column;
}
.tools {
    display: grid;
    grid-auto-rows: 1fr;
    padding: 0 2px;
    border-bottom: 1px solid #3d3d3d;
}
.tools button {
    background-image: linear-gradient(135deg, transparent 50%, #bbb 50%);
    background-size: 3px 3px;
    background-position: right 1px bottom 2px;
    background-repeat: no-repeat;
}
.tools .single {
    background-image: none;
}
.tools-select {
    height: 131px;
    padding-top: 5px;
}
.tools-paint {
    height: 167px;
}
.tools-vector {
    height: 84px;
    padding-top: 1px;
}
.tools-view {
    height: 42px;
    border: 0;
}
.tools-mode {
    height: 43px;
    padding-top: 2px;
    border: 0;
}
.tools-mode svg {
    width: 15px;
    height: 13px;
}
.color-mini {
    display: flex;
    justify-content: space-between;
    padding: 2px 3px 5px 1px;
}
.color-mini svg {
    width: 9px;
    height: 9px;
}
.swatches {
    display: grid;
    grid-template-columns: 8px 6px 8px;
    grid-template-rows: 8px 7px 8px;
    padding-left: 2px;
}
.swatches button {
    border: 1px solid #ddd;
}
.fore {
    grid-area: 1 / 1 / 3 / 3;
    background: #ce0d10;
    outline: 1px solid #444;
}
.back {
    grid-area: 2 / 2 / 4 / 4;
    background: #f2f2f2;
}

/* document window */
.document {
    position: relative;
    flex: 1;
    min-width: 0;
    margin-right: 3px;
    display: grid;
    grid-template: 16px 13px 1fr 12px / 13px 1fr 12px;
    background: #464646;
}
.doc-tabs {
    grid-column: 1 / -1;
    display: flex;
    background: #3b3b3b;
    color: #b4b4b4;
    font: 10px/15px Roboto, "Noto Sans CJK SC", sans-serif;
    white-space: nowrap;
    border-bottom: 1px solid #303030;
}
.doc-tabs a {
    padding: 0 6px 0 8px;
    border-right: 1px solid #2f2f2f;
}
.doc-tabs b {
    display: inline-block;
    width: 11px;
    font-size: 11px;
}
.doc-tabs .active {
    background: #535353;
    color: #e2e2e2;
}
.corner {
    background: #535353;
}
.ruler-x {
    grid-column: 2 / 4;
    width: 100%;
    height: 13px;
}
.ruler-y {
    width: 13px;
    height: 100%;
}
.ruler-x, .ruler-y {
    background: #3d3d3d;
    font: 9px "Liberation Sans", sans-serif;
    fill: #c4c4c4;
    stroke-width: 1;
}
.ruler-x path, .ruler-y path {
    stroke: #8c8c8c;
}
.canvas {
    position: relative;
    overflow: hidden;
    background: #ebebeb;
}
.artboard-top {
    height: 16px;
    background: #232c2f;
}
.guide {
    position: absolute;
    top: 0;
    bottom: 0;
    left: 279px;
    width: 2px;
    background: #5ceee0;
}
.frame {
    position: absolute;
    top: 71px;
    left: 280px;
    width: 139px;
    height: 373px;
    padding-top: 19px;
    border: 2px solid #3a4652;
    display: flex;
    flex-direction: column;
    gap: 38px;
}
.item {
    width: 112px;
    height: 53px;
    margin-left: 37px;
    padding: 10px 18px;
    color: #111;
    white-space: nowrap;
}
.item h2 {
    font: 700 16px/20px "Noto Sans CJK SC", sans-serif;
}
.item p {
    margin-left: -2px;
    color: #666;
    font: 300 10px/20px Roboto, sans-serif;
}
.hot {
    flex: none;
    margin-left: 45px;
    background: #663a91;
    color: #fff;
}
.hot p {
    color: #d8cce8;
}
.scroll-y {
    display: flex;
    justify-content: center;
    background: #444;
}
.scroll-y i {
    width: 6px;
    height: 72px;
    margin-top: 134px;
    border-radius: 3px;
    background: #8a8a8a;
}
.status {
    grid-column: 1 / -1;
    display: flex;
    align-items: center;
    background: #4b4b4b;
    font: 500 10px/12px Roboto, "Noto Sans CJK SC", sans-serif;
}
.zoom-level {
    width: 49px;
    padding-left: 13px;
}
.share svg {
    width: 12px;
    height: 11px;
    color: #aaa;
}
.doc-size {
    width: 101px;
    margin-left: 29px;
    font-size: 9px;
}
.more {
    width: 16px;
}
.scroll-x {
    flex: 1;
    align-self: stretch;
    display: flex;
    align-items: center;
    justify-content: center;
    padding-left: 40px;
    background: #414141;
}
.scroll-x i {
    width: 50px;
    height: 6px;
    border-radius: 3px;
    background: #8a8a8a;
}

/* floating properties panel */
.floating {
    position: absolute;
    top: 62px;
    left: 0;
    width: 221px;
    height: 296px;
    display: flex;
    flex-direction: column;
    padding-top: 3px;
    background: linear-gradient(#333 3px, #535353 3px);
    border: 1px solid #333;
    border-top: 0;
    box-shadow: 1px 2px 5px rgba(0, 0, 0, 0.35);
}
.panel-tabs {
    flex: none;
    display: flex;
    height: 14px;
    background: #404040;
    color: #b5b5b5;
    font-weight: 600;
    line-height: 14px;
}
.panel-tabs a {
    padding: 0 5px 0 4px;
    border-right: 1px solid #333;
}
.panel-tabs .active {
    background: #535353;
    color: #eee;
}
.tools-right {
    margin-left: auto;
    display: flex;
    align-items: center;
    gap: 11px;
    padding-right: 3px;
}
.no-props {
    padding: 7px 6px 8px;
    font-weight: 700;
    border-bottom: 1px solid #3e3e3e;
}
.props-body {
    flex: 1;
    display: flex;
    justify-content: flex-end;
}
.props-body i {
    width: 12px;
    background: #474747;
    border-left: 1px solid #3e3e3e;
}
.grip-bar {
    height: 7px;
    border-top: 1px solid #3b3b3b;
    background: linear-gradient(#3a3a3a, #3a3a3a) center / 16px 2px no-repeat;
}

/* layers panel */
.layers {
    flex: none;
    width: 252px;
    display: flex;
    flex-direction: column;
}
.layer-opts {
    flex: none;
    display: flex;
    align-items: center;
    height: 22px;
    padding: 0 4px;
    background: #535353;
    border-bottom: 1px solid #414141;
    font-weight: 600;
}
.lock-row {
    height: 24px;
}
.pick-kind {
    width: 58px;
}
.search {
    width: 10px;
    height: 10px;
}
.pick-blend {
    width: 84px;
    margin-right: 4px;
}
.filters {
    display: flex;
    gap: 5px;
    margin-left: 9px;
    color: #d0d0d0;
}
.filters button, .locks button {
    width: 14px;
    height: 14px;
}
.filters svg, .locks svg {
    width: 12px;
    height: 12px;
}
.filters .switch {
    width: 7px;
    height: 13px;
    margin-left: 3px;
    border: 1px solid #333;
    background: linear-gradient(#999 45%, #3a3a3a 45%);
}
.locks {
    display: flex;
    gap: 3px;
    margin-left: 2px;
    color: #8f8f8f;
}
.locks .lit {
    color: #ddd;
}
.locks + .amount {
    margin-left: auto;
}
.locks ~ .drop {
    margin-right: 72px;
}
.amount {
    display: flex;
    align-items: center;
    gap: 2px;
}
.amount input {
    width: 30px;
    height: 15px;
    padding-left: 3px;
    background: #3b3b3b;
    border: 1px solid #303030;
    font: 500 10px/13px Roboto, sans-serif;
}
.drop {
    width: 14px;
    height: 15px;
    background: #656565;
    border: 1px solid #3a3a3a;
}
.layer-area {
    flex: 1;
    min-height: 0;
    display: flex;
    background: #535353;
}
.layer-area .scroll-y {
    width: 10px;
}
.layer-area .scroll-y i {
    height: 78px;
    margin-top: 2px;
}
.layer-list {
    flex: 1;
    overflow: hidden;
    list-style: none;
    font-weight: 600;
}
.row {
    display: flex;
    align-items: center;
    height: 18px;
    border-bottom: 1px solid #424242;
}
.eye {
    flex: none;
    width: 24px;
    align-self: stretch;
    border-right: 1px solid #424242;
    color: #c9c9c9;
}
.eye svg, .eye-icon {
    width: 10px;
    height: 8px;
}
.board {
    height: 20px;
    gap: 2px;
    background: #3d3d3d;
    border-color: #3d3d3d;
}
.board .eye {
    border-color: #3d3d3d;
}
.board .name {
    margin-left: 5px;
}
.group .tri-r {
    margin-left: 25px;
}
.group .tri-d {
    margin-left: 23px;
}
.folder {
    width: 12px;
    height: 10px;
    margin: 0 8px 0 3px;
}
.folder.open {
    width: 14px;
    margin-right: 7px;
    margin-left: 2px;
}
.selected {
    background: linear-gradient(90deg, #535353 24px, #6b7b90 24px);
}
.fx {
    margin-left: auto;
    font: italic 12px/14px "Liberation Serif", serif;
}
.fx-toggle {
    width: 8px;
    align-self: stretch;
    margin-left: 4px;
    background: #8b97a6;
    color: #222;
    transform: rotate(180deg);
}
.effects {
    height: 31px;
}
.effect-list {
    padding-left: 44px;
    line-height: 15px;
}
.effect-list p {
    display: flex;
    align-items: center;
    gap: 4px;
}
.effect-list .sub {
    padding-left: 13px;
}
.tall {
    height: 50px;
}
.type-thumb {
    display: grid;
    justify-items: center;
    width: 84px;
    padding-left: 38px;
}
.type-thumb .i16 {
    grid-area: 1 / 1;
}
.type-thumb .warn {
    position: absolute;
    width: 10px;
    height: 10px;
    transform: translate(8px, 18px);
}
.thumb {
    display: flex;
    align-items: flex-end;
    justify-content: flex-end;
    margin: 0 6px 0 24px;
    border: 1px solid #333;
    background: #ebebeb;
}
.thumb svg {
    width: 10px;
    height: 10px;
}
.purple {
    width: 43px;
    height: 22px;
    background: #663a91;
    border-color: #ccc;
    outline: 1px solid #333;
}
.narrow {
    width: 18px;
    height: 44px;
}
.page {
    width: 34px;
    height: 44px;
    margin: 0 5px 0 0;
}
.chain {
    width: 8px;
    height: 12px;
}
.layer-actions {
    flex: none;
    display: flex;
    justify-content: flex-end;
    gap: 5px;
    height: 14px;
    padding-right: 17px;
    background: #4b4b4b;
    border-top: 1px solid #353535;
    color: #c4c4c4;
}
.layer-actions button {
    width: 16px;
}
.layer-actions svg {
    width: 11px;
    height: 10px;
}
.layer-actions .off {
    color: #8c8c8c;
}
.layer-actions .fx {
    margin: 0;
    font-weight: 700;
}

/* things floating over the window */
.watermark {
    position: absolute;
    top: 19px;
    right: 18px;
    display: flex;
    align-items: center;
    color: #fff;
    opacity: 0.36;
    pointer-events: none;
}
.watermark svg {
    width: 72px;
    height: 48px;
}
.watermark span {
    font: 400 46px/48px "Noto Sans CJK SC", sans-serif;
}
.pointer {
    position: absolute;
    top: 239px;
    left: 834px;
    width: 12px;
    height: 15px;
}
```
FILE: script.js
```javascript
function drawRulers() {
    const rulerX = document.getElementById("rulerX");
    const rulerY = document.getElementById("rulerY");
    let width = rulerX.getBoundingClientRect().width;
    let height = rulerY.getBoundingClientRect().height;
    let path = "";
    let labels = "";

    // horizontal ruler, one label every 50 px
    for (let value = 0; value * 0.775 < width; value += 5) {
        let x = Math.round(value * 0.775 - 2) + 0.5;
        let top = value % 50 === 0 ? 0 : (value % 10 === 0 ? 9 : 10);
        path += `M${x} ${top}V13`;
        if (value % 50 === 0) {
            labels += `<text x="${x + 2}" y="11">${value}</text>`;
        }
    }
    rulerX.innerHTML = `<path d="${path}"/>${labels}`;

    // vertical ruler, digits stacked one under another
    path = "";
    labels = "";
    for (let value = 400; (value - 400) * 0.792 < height; value += 5) {
        let y = Math.round((value - 400) * 0.792) + 0.5;
        let left = value % 50 === 0 ? 0 : (value % 10 === 0 ? 9 : 10);
        path += `M${left} ${y}H13`;
        if (value % 50 === 0) {
            String(value).split("").forEach((digit, i) => {
                let base = y + 9 + i * 7;
                if (base < height + 3) {
                    labels += `<text x="3" y="${base}">${digit}</text>`;
                }
            });
        }
    }
    rulerY.innerHTML = `<path d="${path}"/>${labels}`;
}

drawRulers();
window.addEventListener("resize", drawRulers);
```
